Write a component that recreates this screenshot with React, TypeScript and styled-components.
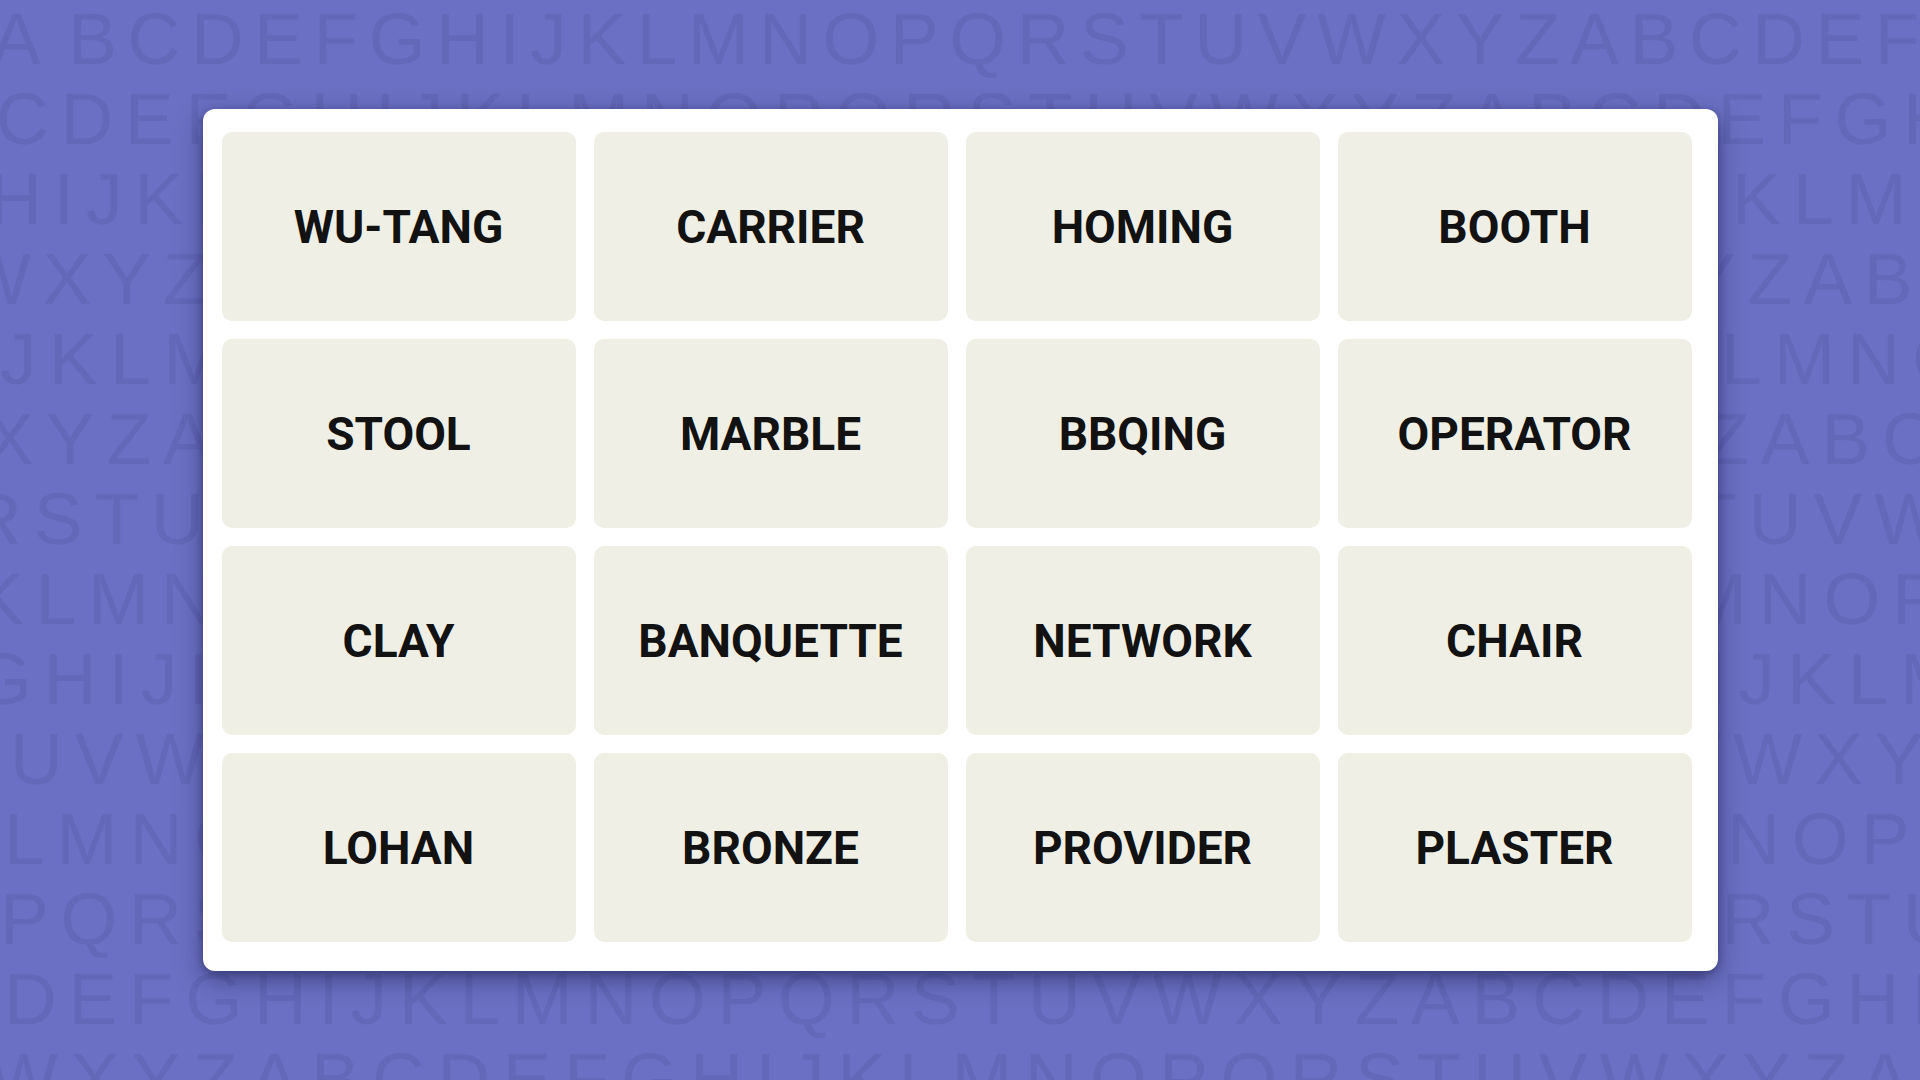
import React from "react";
import styled, { createGlobalStyle } from "styled-components";

const GlobalStyle = createGlobalStyle`
  html, body {
    margin: 0;
    padding: 0;
    background: #6c70c4;
  }
  * { box-sizing: border-box; }
`;

const ALPHABET = "ABCDEFGHIJKLMNOPQRSTUVWXYZ";

// Each backdrop line: the letter it opens with, its sideways nudge, its tracking,
// and an optional extra gap after the opening letter.
type LetterLine = { start: string; shift: number; spacing: number; leadGap?: number };

const LETTER_ROWS: LetterLine[] = [
  { start: "A", shift: -8, spacing: 10.6, leadGap: 17 },
  { start: "C", shift: -4, spacing: 11.8 },
  { start: "H", shift: -11, spacing: 12 },
  { start: "W", shift: -38, spacing: 11.5 },
  { start: "J", shift: 0, spacing: 12.5 },
  { start: "X", shift: -15, spacing: 12 },
  { start: "R", shift: -31, spacing: 12 },
  { start: "K", shift: -25, spacing: 12 },
  { start: "G", shift: -25, spacing: 12 },
  { start: "U", shift: 10, spacing: 12 },
  { start: "L", shift: 4, spacing: 12 },
  { start: "P", shift: 0, spacing: 11.8 },
  { start: "D", shift: 4, spacing: 11.8 },
  { start: "W", shift: -11, spacing: 12.5 },
];

const WORDS = [
  "WU-TANG", "CARRIER", "HOMING", "BOOTH",
  "STOOL", "MARBLE", "BBQING", "OPERATOR",
  "CLAY", "BANQUETTE", "NETWORK", "CHAIR",
  "LOHAN", "BRONZE", "PROVIDER", "PLASTER",
];

const Page = styled.main`
  display: grid;
  width: 100vw;
  height: 100vh;
  overflow: hidden;
  background: #6c70c4;
`;

const Backdrop = styled.div`
  grid-area: 1 / 1;
  display: flex;
  flex-direction: column;
  margin-top: -1px;
  overflow: hidden;
  user-select: none;
`;

const LetterRow = styled.div<{ $shift: number; $spacing: number }>`
  height: 80px;
  line-height: 80px;
  margin-left: ${(p) => p.$shift}px;
  white-space: nowrap;
  font-family: "Liberation Sans", Arial, sans-serif;
  font-size: 73px;
  font-weight: 400;
  letter-spacing: ${(p) => p.$spacing}px;
  color: #6368b9;
`;

const LeadLetter = styled.span<{ $gap: number }>`
  margin-right: ${(p) => p.$gap}px;
`;

const Board = styled.section`
  grid-area: 1 / 1;
  place-self: center;
  background: #ffffff;
  border-radius: 12px;
  padding: 23px 26px 29px 19px;
  box-shadow: 0 8px 24px rgba(22, 24, 66, 0.5), 0 2px 6px rgba(22, 24, 66, 0.3);
`;

const Grid = styled.div`
  display: grid;
  grid-template-columns: repeat(4, 354px);
  grid-auto-rows: 189px;
  gap: 18px;
`;

const Tile = styled.div`
  display: flex;
  align-items: center;
  justify-content: center;
  background: #efefe6;
  border-radius: 10px;
  font-family: Roboto, "Liberation Sans", Arial, sans-serif;
  font-weight: 700;
  font-size: 46px;
  color: #121212;
  text-transform: uppercase;
`;

function restOfRow(start: string) {
  const i = ALPHABET.indexOf(start);
  return ALPHABET.slice(i + 1) + ALPHABET + ALPHABET;
}

export default function App() {
  return (
    <>
      <GlobalStyle />
      <Page>
        <Backdrop aria-hidden="true">
          {LETTER_ROWS.map((row, idx) => (
            <LetterRow key={idx} $shift={row.shift} $spacing={row.spacing}>
              <LeadLetter $gap={row.leadGap ?? 0}>{row.start}</LeadLetter>
              {restOfRow(row.start)}
            </LetterRow>
          ))}
        </Backdrop>
        <Board>
          <Grid>
            {WORDS.map((w) => (
              <Tile key={w}>{w}</Tile>
            ))}
          </Grid>
        </Board>
      </Page>
    </>
  );
}
